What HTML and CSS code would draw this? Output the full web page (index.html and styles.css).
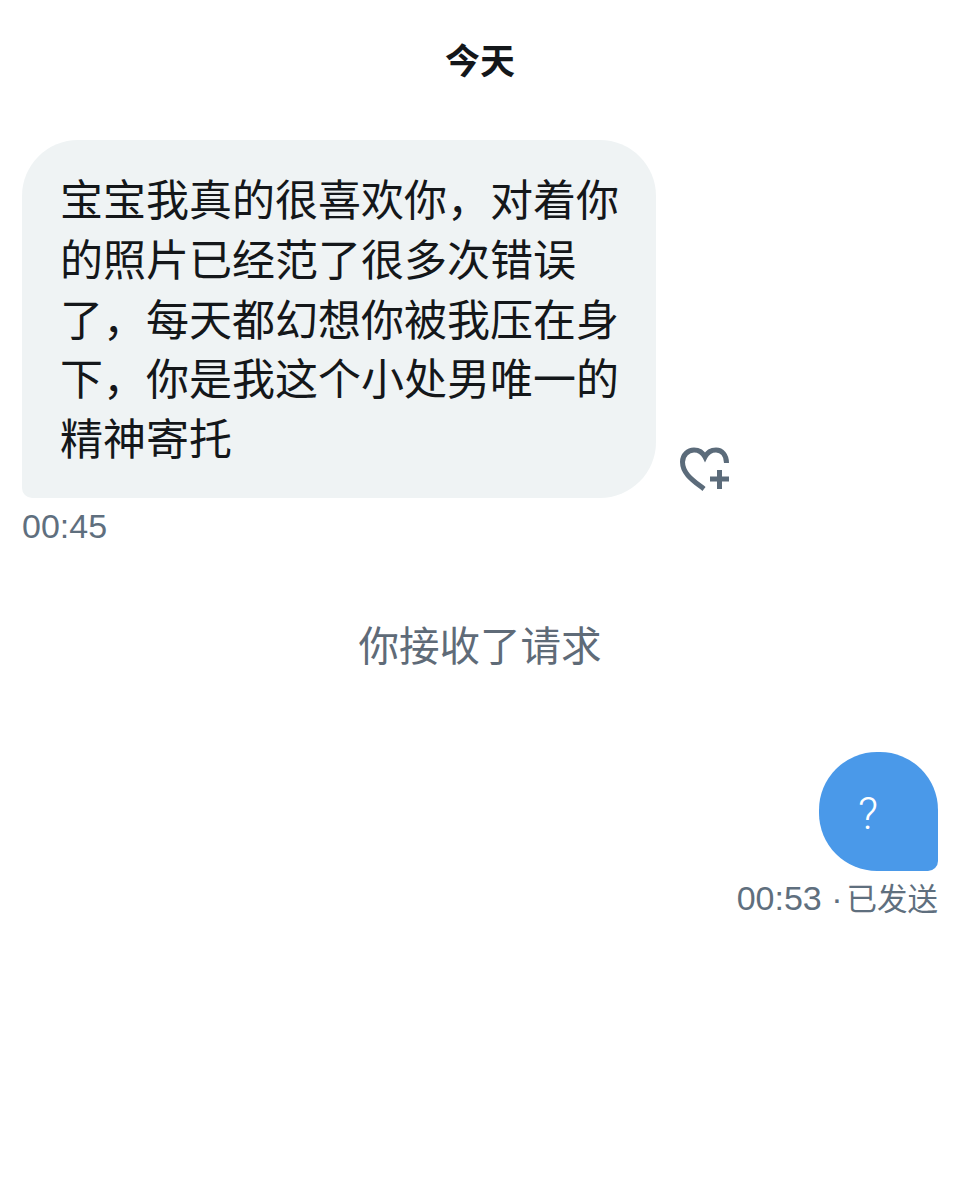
FILE: index.html
```html
<!DOCTYPE html>
<html lang="zh-CN">
<head>
  <meta charset="UTF-8">
  <meta name="viewport" content="width=device-width, initial-scale=1.0">
  <title>今天</title>
  <link rel="stylesheet" href="styles.css">
</head>
<body>
  <div class="chat">
    <h1 class="day">今天</h1>

    <!-- incoming message -->
    <div class="row">
      <div class="bubble-in">宝宝我真的很喜欢你，对着你的照片已经范了很多次错误了，每天都幻想你被我压在身下，你是我这个小处男唯一的精神寄托</div>
      <svg class="like" viewBox="0 0 52 46" width="52" height="46" fill="none" stroke="#5b6b7a" stroke-width="5">
        <path d="M25 43 C15 35 3.500 28 3.500 16 C3.500 9 9 4 15 4 C20 4 24 7 26 11 C28 7 32 4 37 4 C43 4 47.500 9 47.500 17"/>
        <path d="M31 33 H50 M40.500 24 V43"/>
      </svg>
    </div>
    <div class="time">00:45</div>

    <p class="notice">你接收了请求</p>

    <!-- outgoing message -->
    <div class="out">
      <div class="bubble-out">?</div>
      <div class="time time-out">00:53 ·<span class="sent">已发送</span></div>
    </div>
  </div>
</body>
</html>
```

FILE: styles.css
```css
body {
  margin: 0;
  background: #fff;
  font-family: "Liberation Sans", "Noto Sans CJK SC", sans-serif;
  color: #14171a;
}

.chat {
  padding: 0 22px;
}

.day {
  margin: 0;
  padding-top: 40px;
  height: 140px;
  box-sizing: border-box;
  font-size: 35px;
  line-height: 44px;
  font-weight: 700;
  text-align: center;
  color: #14171a;
}

.row {
  display: flex;
  align-items: flex-end;
  gap: 23px;
}

.bubble-in {
  width: 634px;
  height: 358px;
  box-sizing: border-box;
  padding: 28px 37px 0 38px;
  background: #eff3f4;
  border-radius: 56px 56px 56px 10px;
  font-family: "Noto Sans CJK SC", sans-serif;
  font-size: 43px;
  line-height: 59.750px;
}

.like {
  margin-bottom: 6px;
}

.time {
  margin-top: 9px;
  font-size: 34px;
  line-height: 38px;
  color: #5f6f7e;
}

.time-out {
  margin-top: 7px;
}

.notice {
  margin: 71px 0 0;
  font-family: "Noto Sans CJK SC", sans-serif;
  font-size: 40.500px;
  line-height: 56px;
  text-align: center;
  color: #5f6b78;
}

.out {
  margin-top: 80px;
  display: flex;
  flex-direction: column;
  align-items: flex-end;
}

.bubble-out {
  width: 119px;
  height: 119px;
  box-sizing: border-box;
  padding: 4px 21px 0 0;
  display: flex;
  align-items: center;
  justify-content: center;
  background: #4a99e9;
  border-radius: 58px 58px 10px 58px;
  color: #fff;
  font-family: Roboto, sans-serif;
  font-weight: 300;
  font-size: 44px;
}

.sent {
  margin-left: 4px;
  font-family: "Noto Sans CJK SC", sans-serif;
  font-size: 30.500px;
}
```
